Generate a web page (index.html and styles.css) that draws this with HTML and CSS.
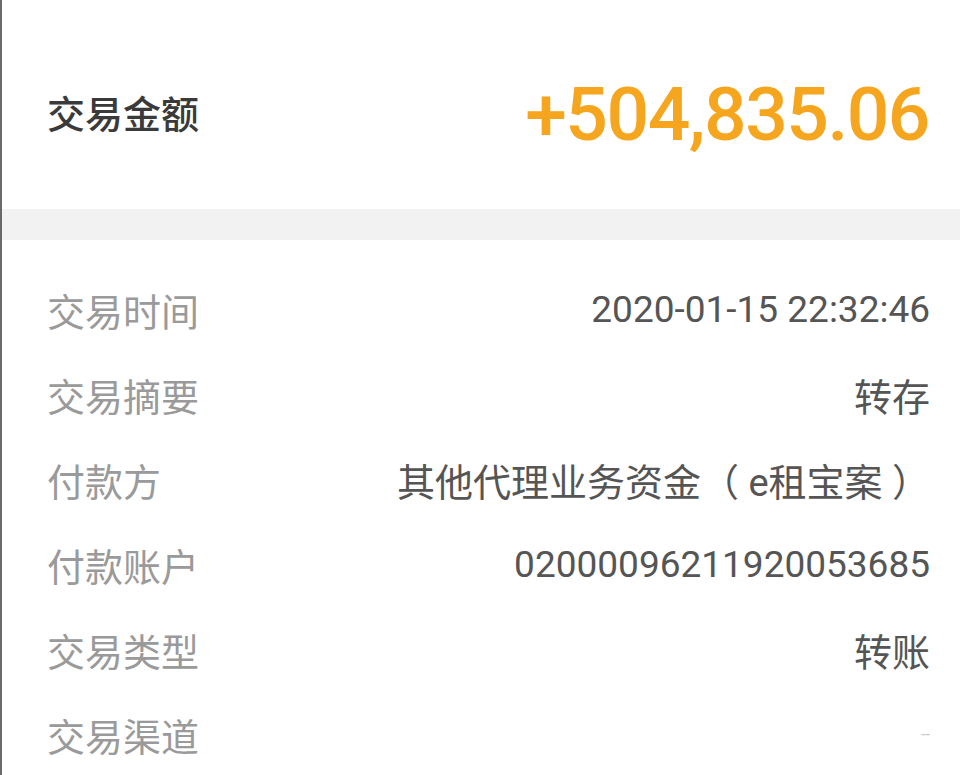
FILE: index.html
```html
<!DOCTYPE html>
<html lang="zh-CN">
<head>
<meta charset="utf-8">
<title>交易详情</title>
<link rel="stylesheet" href="styles.css">
</head>
<body>
<div class="page">
  <header class="summary">
    <span class="summary-label">交易金额</span>
    <span class="summary-amount">+504,835.06</span>
  </header>
  <div class="divider"></div>
  <section class="details">
    <div class="row"><span class="label">交易时间</span><span class="value value-num">2020-01-15 22:32:46</span></div>
    <div class="row"><span class="label">交易摘要</span><span class="value">转存</span></div>
    <div class="row"><span class="label">付款方</span><span class="value">其他代理业务资金（ e租宝案 ）</span></div>
    <div class="row"><span class="label">付款账户</span><span class="value value-num">02000096211920053685</span></div>
    <div class="row"><span class="label">交易类型</span><span class="value">转账</span></div>
    <div class="row"><span class="label">交易渠道</span><span class="value value-faint">--</span></div>
  </section>
</div>
</body>
</html>
```
FILE: styles.css
```css
html, body {
  margin: 0;
  padding: 0;
  background: #ffffff;
}
body {
  font-family: Roboto, "Noto Sans CJK SC", sans-serif;
  width: 960px;
  height: 775px;
  overflow: hidden;
}
.page {
  border-left: 2px solid #6a6a6a;
  height: 775px;
  box-sizing: border-box;
}
.summary {
  height: 209px;
  display: flex;
  align-items: center;
  justify-content: space-between;
  padding: 14px 31px 0 45px;
  box-sizing: border-box;
}
.summary-label {
  font-size: 38px;
  font-weight: 500;
  color: #3a3a3a;
}
.summary-amount {
  font-size: 75px;
  font-weight: 500;
  color: #f5a51e;
  letter-spacing: -1.5px;
  margin-top: 4px;
}
.divider {
  height: 31px;
  background: #f2f2f2;
}
.details {
  padding: 27px 30px 0 45px;
}
.row {
  height: 85px;
  display: flex;
  align-items: center;
  justify-content: space-between;
}
.label {
  font-size: 38px;
  color: #9a9a9a;
}
.value {
  font-size: 38px;
  color: #555555;
}
.value-num {
  font-size: 37px;
}
.value-faint {
  font-size: 16px;
  color: #c8c8c8;
}
```
